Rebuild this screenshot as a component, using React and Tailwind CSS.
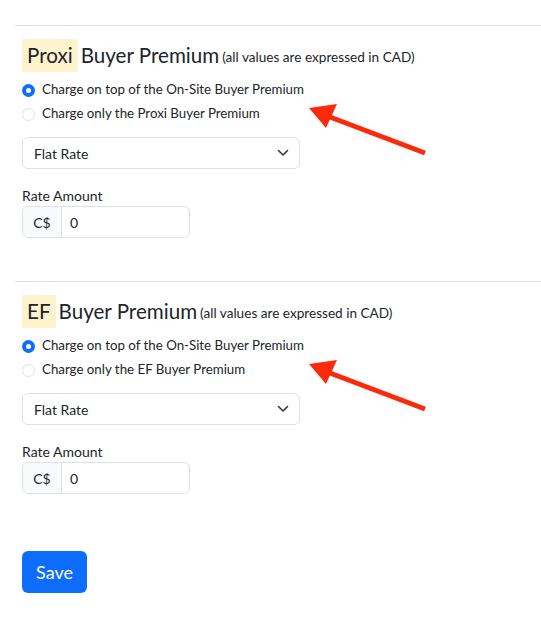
import { useState } from "react";

const Radio = ({ checked, label, onClick }) => (
  <label className="flex items-center h-[24px] cursor-pointer" onClick={onClick}>
    {checked ? (
      <span className="w-[13px] h-[13px] rounded-full bg-[#0d6efd] flex items-center justify-center">
        <span className="w-[5px] h-[5px] rounded-full bg-white" />
      </span>
    ) : (
      <span className="w-[13px] h-[13px] rounded-full border border-[#dee2e6] bg-white" />
    )}
    <span className="ml-[7px] text-[13.3px] text-[#212529]">{label}</span>
  </label>
);

const Arrow = () => (
  <svg className="absolute left-0 top-0 pointer-events-none" width="541" height="160">
    <line x1="322" y1="89" x2="425" y2="128" stroke="#fb2a0b" strokeWidth="5" />
    <polygon points="309,83 337,79 326,103" fill="#fb2a0b" />
  </svg>
);

const PremiumSection = ({ name }) => {
  const [mode, setMode] = useState("top");
  return (
    <div className="relative">
      <hr className="border-0 border-t border-[#dee2e6] ml-[15px]" />
      <div className="pl-[22px]">
        <h4 className="mt-[13px] h-[33px] flex items-center text-[20.6px] text-[#212529]">
          <span className="bg-[#fff3cd] px-[5px] h-[33px] flex items-center">{name}</span>
          <span className="ml-[3px]">Buyer Premium</span>
          <span className="ml-[3px] text-[13.6px] mt-[4px]">(all values are expressed in CAD)</span>
        </h4>
        <div className="mt-[6px]">
          <Radio
            checked={mode === "top"}
            label="Charge on top of the On-Site Buyer Premium"
            onClick={() => setMode("top")}
          />
          <Radio
            checked={mode === "only"}
            label={`Charge only the ${name} Buyer Premium`}
            onClick={() => setMode("only")}
          />
        </div>
        <div className="mt-[11px] w-[278px] h-[32px] border border-[#dee2e6] rounded-[6px] flex items-center justify-between pl-[11px] pr-[10px] text-[14px] text-[#212529]">
          <span>Flat Rate</span>
          <svg width="12" height="8" viewBox="0 0 12 8">
            <path d="M1.5 1.5 L6 6 L10.5 1.5" fill="none" stroke="#343a40" strokeWidth="1.6" strokeLinecap="round" strokeLinejoin="round" />
          </svg>
        </div>
        <div className="mt-[16px] h-[20px] flex items-center text-[14px] text-[#212529]">Rate Amount</div>
        <div className="mt-[1px] w-[168px] h-[32px] flex border border-[#dee2e6] rounded-[6px] text-[14px] text-[#212529]">
          <span className="w-[39px] bg-[#f8f9fa] border-r border-[#dee2e6] rounded-l-[6px] flex items-center justify-center">C$</span>
          <span className="flex items-center pl-[8px]">0</span>
        </div>
      </div>
      <Arrow />
    </div>
  );
};

export default function App() {
  return (
    <div className="bg-white min-h-screen pt-[25px] font-['Lato','Liberation_Sans',sans-serif]">
      <PremiumSection name="Proxi" />
      <div className="h-[43px]" />
      <PremiumSection name="EF" />
      <div className="pl-[22px] mt-[57px]">
        <button className="w-[65px] h-[42px] bg-[#0d6efd] text-white text-[18px] rounded-[6px]">Save</button>
      </div>
    </div>
  );
}
